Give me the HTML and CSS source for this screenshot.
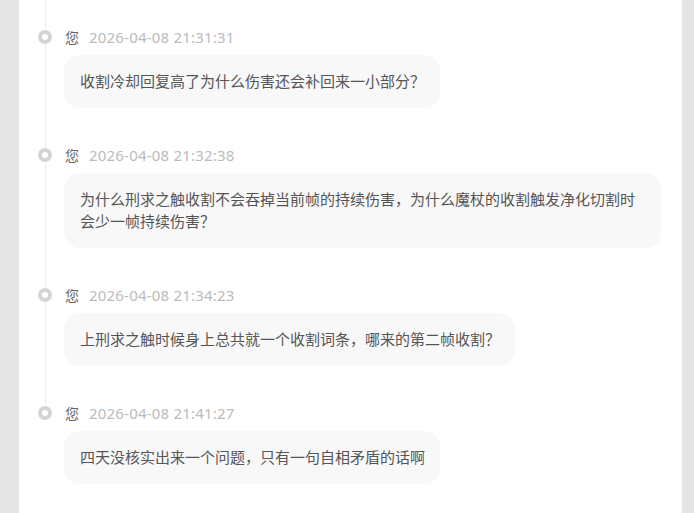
FILE: index.html
```html
<!DOCTYPE html>
<html lang="zh-CN">
<head>
    <meta charset="UTF-8">
    <meta name="viewport" content="width=device-width, initial-scale=1.0">
    <title>历史提问</title>
    <link rel="stylesheet" href="styles.css">
</head>
<body>

    <div class="card">
        <ul class="timeline">
            <li class="item">
                <div class="meta">
                    <span class="who">您</span>
                    <span class="time">2026-04-08 21:31:31</span>
                </div>
                <div class="bubble">收割冷却回复高了为什么伤害还会补回来一小部分？</div>
            </li>
            <li class="item">
                <div class="meta">
                    <span class="who">您</span>
                    <span class="time">2026-04-08 21:32:38</span>
                </div>
                <div class="bubble">为什么刑求之触收割不会吞掉当前帧的持续伤害，为什么魔杖的收割触发净化切割时会少一帧持续伤害？</div>
            </li>
            <li class="item">
                <div class="meta">
                    <span class="who">您</span>
                    <span class="time">2026-04-08 21:34:23</span>
                </div>
                <div class="bubble">上刑求之触时候身上总共就一个收割词条，哪来的第二帧收割？</div>
            </li>
            <li class="item">
                <div class="meta">
                    <span class="who">您</span>
                    <span class="time">2026-04-08 21:41:27</span>
                </div>
                <div class="bubble">四天没核实出来一个问题，只有一句自相矛盾的话啊</div>
            </li>
        </ul>
    </div>

</body>
</html>
```

FILE: styles.css
```css
body {
    margin: 0;
    background-color: #e5e5e5;
    font-family: "Noto Sans CJK SC", "Noto Sans", sans-serif;
    color: #555;
}

.card {
    background-color: #fff;
    margin: 0 12px 0 19px;
    min-height: 513px;
    padding: 27px 20px 0 26px;
    box-sizing: border-box;
}

.timeline {
    list-style: none;
    margin: 0;
    padding: 0;
    position: relative;
}

/* vertical line, from page top down to the last dot */
.timeline::before {
    content: "";
    position: absolute;
    left: 0;
    top: -27px;
    bottom: 0;
    width: 1px;
    background-color: #eeeeee;
}

.item {
    position: relative;
    padding-left: 19px;
    margin-bottom: 37px;
}

.item:last-child {
    margin-bottom: 0;
    padding-bottom: 30px;
}

.item::before {
    content: "";
    position: absolute;
    left: -7px;
    top: 3px;
    width: 6px;
    height: 6px;
    border: 4px solid #d4d4d4;
    border-radius: 50%;
    background-color: #fff;
}

.item:last-child::after {
    content: "";
    position: absolute;
    left: 0;
    top: 17px;
    bottom: -1px;
    width: 2px;
    background-color: #fff;
}

.meta {
    display: flex;
    align-items: center;
    gap: 10px;
    height: 20px;
    margin-bottom: 8px;
    margin-left: 1px;
}

.who {
    font-size: 14px;
    color: #666;
}

.time {
    font-family: "Noto Sans", sans-serif;
    font-size: 15px;
    letter-spacing: 0.2px;
    color: #bbb;
}

.bubble {
    display: inline-block;
    max-width: 566px;
    background-color: #f8f8f8;
    border-radius: 16px;
    padding: 15px 15px 16px 16px;
    font-size: 15px;
    line-height: 22px;
    color: #555;
}
```
